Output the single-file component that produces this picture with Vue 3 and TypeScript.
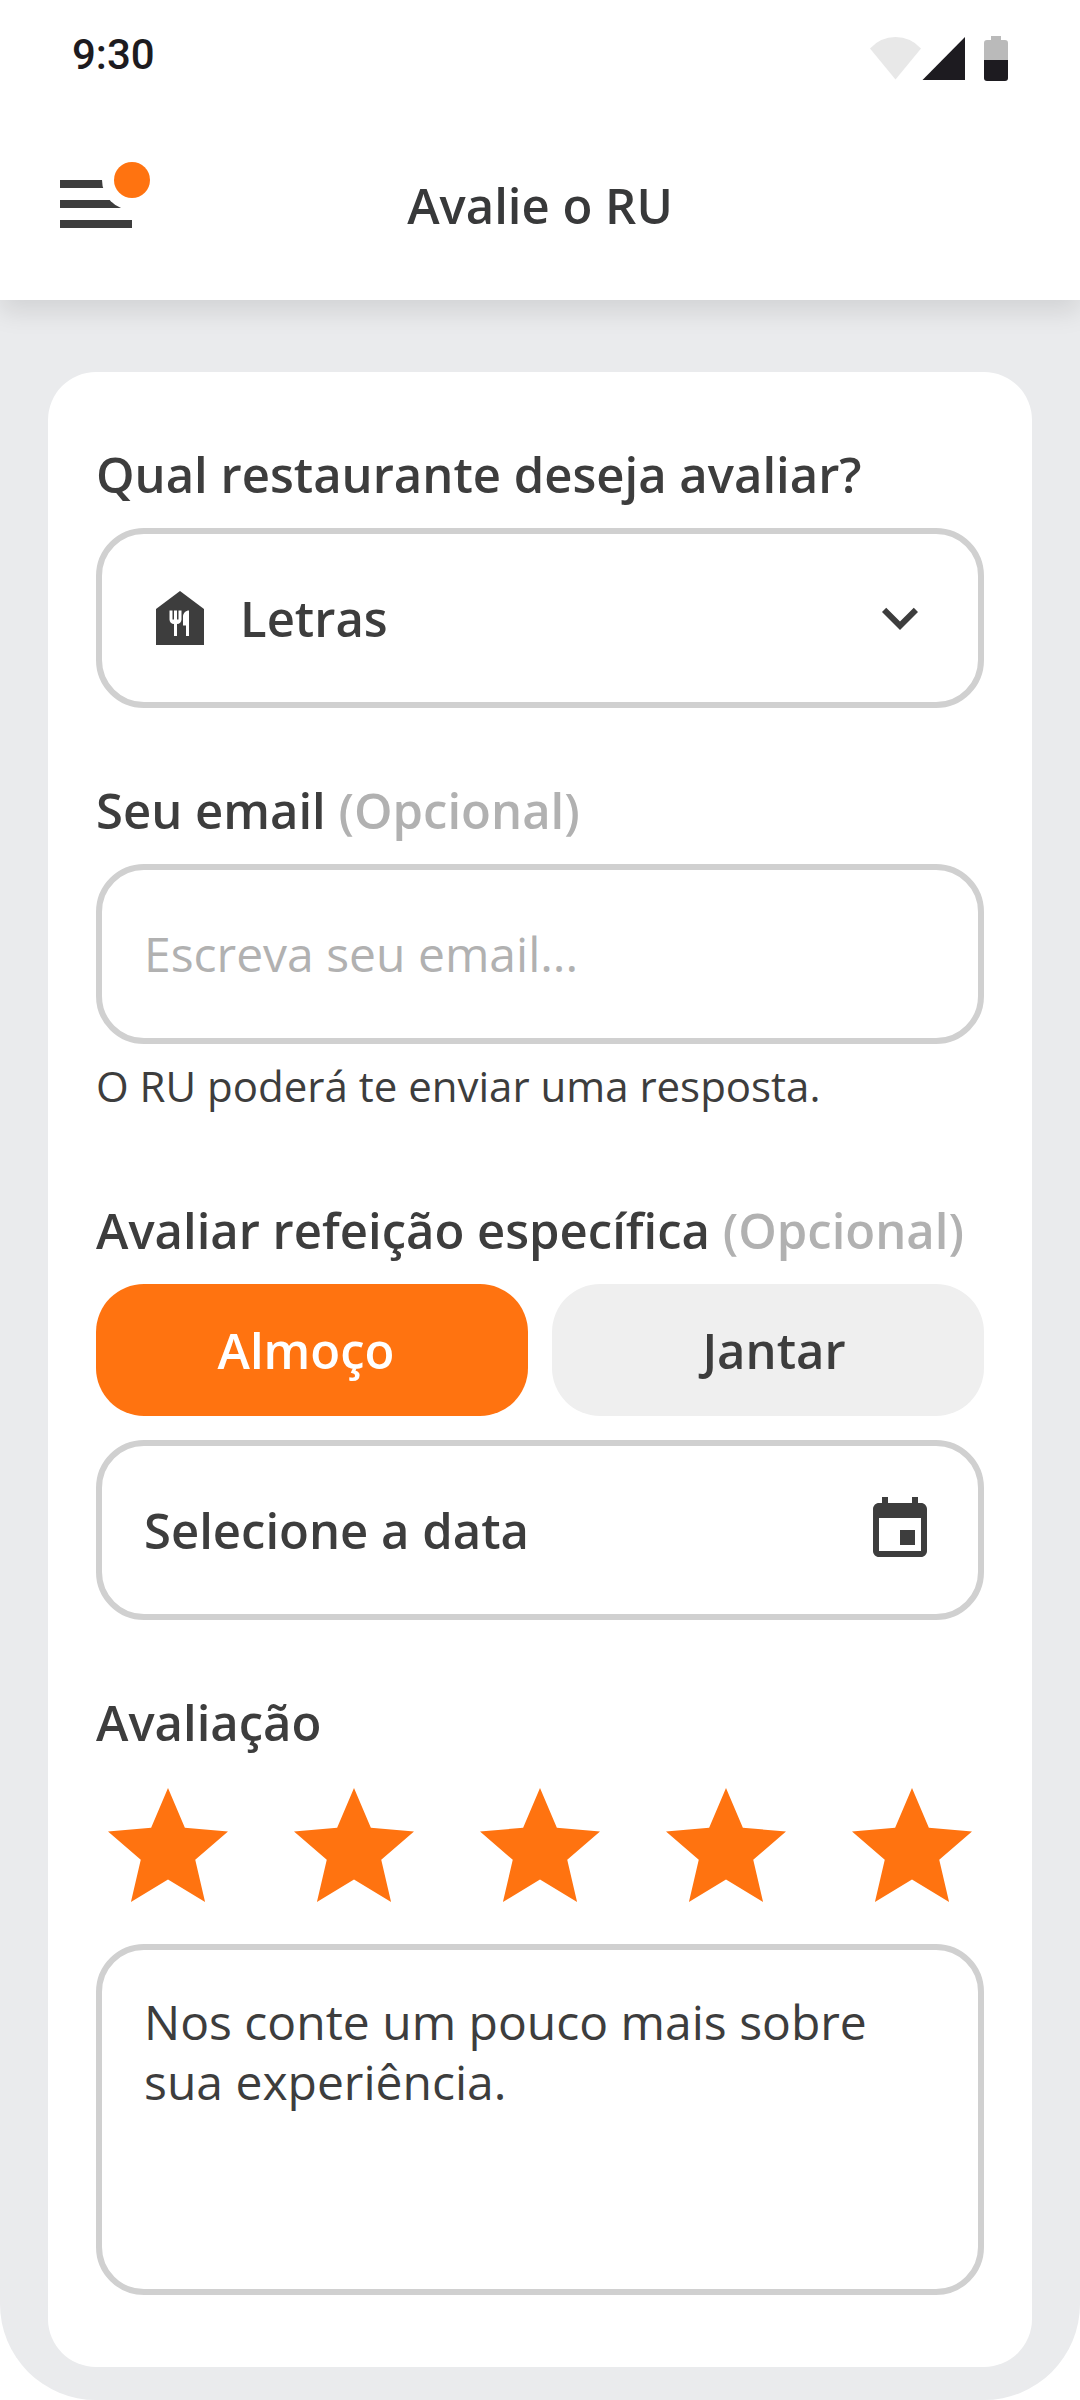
<script setup lang="ts">
import { ref } from 'vue'

type Meal = 'Almoço' | 'Jantar'

const restaurants: string[] = ['Letras']
const meals: Meal[] = ['Almoço', 'Jantar']

const restaurant = ref<string>('Letras')
const email = ref<string>('')
const meal = ref<Meal>('Almoço')
const rating = ref<number>(5)
const comment = ref<string>('')
</script>

<template>
  <div class="screen">
    <header class="top">
      <div class="status">
        <span class="clock">9:30</span>
        <svg class="status-icons" viewBox="0 -8 138 56" aria-hidden="true">
          <path d="M0 13.500Q10.500 2 25.500 2T51 13.500L25.500 44.500z" fill="#e8e8e8" />
          <path d="M95 2v43H52.500z" fill="#1d1b20" />
          <path d="M121 1h10v4h4a3 3 0 0 1 3 3v17h-24V8a3 3 0 0 1 3-3h4z" fill="#bababa" />
          <path d="M114 25h24v18a3 3 0 0 1-3 3h-18a3 3 0 0 1-3-3z" fill="#1d1b20" />
        </svg>
      </div>
      <div class="bar">
        <button class="menu" type="button" aria-label="Menu">
          <svg viewBox="0 0 90 86" aria-hidden="true">
            <path d="M0 18h72v8H0zM0 38h72v8H0zM0 58h72v8H0z" fill="#3d3d3d" />
            <circle cx="72" cy="18" r="30" fill="#fff" />
            <circle cx="72" cy="18" r="18" fill="#ff7310" />
          </svg>
        </button>
        <h1 class="title">Avalie o RU</h1>
      </div>
    </header>

    <main class="content">
      <form class="card" @submit.prevent>
        <section class="group">
          <label class="label" for="restaurant">Qual restaurante deseja avaliar?</label>
          <div class="field">
            <svg class="icon" viewBox="0 0 24 24" aria-hidden="true">
              <path
                d="M12 3 4 9v12h16V9l-8-6zm.5 9.500c0 .83-.67 1.500-1.500 1.500v4h-1v-4c-.83 0-1.500-.67-1.500-1.500v-3h1v3h.5v-3h1v3h.5v-3h1v3zM15 18h-1v-3.500h-1v-3c0-1.100.9-2 2-2V18z"
              />
            </svg>
            <select id="restaurant" v-model="restaurant" class="control strong">
              <option v-for="name in restaurants" :key="name" :value="name">{{ name }}</option>
            </select>
            <svg class="icon" viewBox="0 0 24 24" aria-hidden="true">
              <path d="M16.590 8.590 12 13.170 7.410 8.590 6 10l6 6 6-6z" />
            </svg>
          </div>
        </section>

        <section class="group">
          <label class="label" for="email">Seu email <span class="optional">(Opcional)</span></label>
          <div class="field">
            <input
              id="email"
              v-model="email"
              class="control"
              type="email"
              placeholder="Escreva seu email..."
            />
          </div>
          <p class="hint">O RU poderá te enviar uma resposta.</p>
        </section>

        <section class="group">
          <h2 class="label">Avaliar refeição específica <span class="optional">(Opcional)</span></h2>
          <div class="meals">
            <button
              v-for="name in meals"
              :key="name"
              type="button"
              class="meal"
              :class="{ active: meal === name }"
              :aria-pressed="meal === name"
              @click="meal = name"
            >
              {{ name }}
            </button>
          </div>
          <button type="button" class="field date">
            <span class="control strong">Selecione a data</span>
            <svg class="icon" viewBox="0 0 24 24" aria-hidden="true">
              <path
                d="M17 12h-5v5h5v-5zM16 1v2H8V1H6v2H5c-1.110 0-1.990.9-1.990 2L3 19c0 1.100.89 2 2 2h14c1.100 0 2-.9 2-2V5c0-1.100-.9-2-2-2h-1V1h-2zm3 18H5V8h14v11z"
              />
            </svg>
          </button>
        </section>

        <section class="group">
          <h2 class="label">Avaliação</h2>
          <div class="stars" role="radiogroup" aria-label="Avaliação">
            <label v-for="n in 5" :key="n" class="star" :class="{ lit: n <= rating }">
              <input v-model="rating" type="radio" name="rating" :value="n" :aria-label="`${n} de 5`" />
              <svg viewBox="0 0 24 24" aria-hidden="true">
                <path
                  d="M12 17.270 18.180 21l-1.640-7.030L22 9.240l-7.190-.61L12 2 9.190 8.630 2 9.240l5.460 4.730L5.820 21z"
                />
              </svg>
            </label>
          </div>
          <textarea
            v-model="comment"
            class="field comment"
            aria-label="Comentário"
            placeholder="Nos conte um pouco mais sobre sua experiência."
          ></textarea>
        </section>
      </form>
    </main>
  </div>
</template>

<style>
html,
body {
  background: #fff;
}
</style>

<style scoped>
.screen,
.screen * {
  box-sizing: border-box;
}

.screen {
  display: flex;
  flex-direction: column;
  min-height: 100vh;
  overflow: hidden;
  border-radius: 0 0 96px 96px;
  background: #eaebed;
  color: #3d3d3d;
  font-family: 'Open Sans', 'Noto Sans', sans-serif;
  font-size: 48px;
  line-height: 60px;
}

button,
input,
select,
textarea {
  margin: 0;
  color: inherit;
  font: inherit;
}

.top {
  display: flex;
  flex-direction: column;
  background: #fff;
  box-shadow: 0 12px 24px rgba(0, 0, 0, 0.1);
}

.status {
  display: flex;
  align-items: center;
  justify-content: space-between;
  height: 110px;
  padding: 0 72px;
}

.clock {
  color: #1d1b20;
  font-family: Roboto, sans-serif;
  font-size: 42px;
  font-weight: 500;
}

.status-icons {
  width: 138px;
  height: 56px;
}

.bar {
  display: grid;
  grid-template-columns: 1fr auto 1fr;
  align-items: center;
  height: 190px;
  padding: 0 60px;
}

.menu {
  justify-self: start;
  width: 90px;
  height: 86px;
  padding: 0;
  border: 0;
  background: none;
}

.menu svg,
.star svg {
  display: block;
  width: 100%;
  height: 100%;
}

.title,
.label,
.strong,
.meal {
  font-size: 49px;
  font-weight: 600;
}

.title,
.label {
  margin: 0;
}

.title {
  color: #38393a;
}

.content {
  padding: 72px 48px 33px;
}

.card {
  display: flex;
  flex-direction: column;
  gap: 72px;
  padding: 72px 48px;
  border-radius: 48px;
  background: #fff;
}

.group {
  display: flex;
  flex-direction: column;
  gap: 24px;
}

.optional {
  color: #b1b1b1;
}

.field {
  display: flex;
  align-items: center;
  gap: 24px;
  width: 100%;
  height: 180px;
  padding: 0 42px;
  border: 6px solid #d0d0d0;
  border-radius: 48px;
  background: #fff;
}

.control {
  flex: 1;
  min-width: 0;
  padding: 0;
  border: 0;
  outline: 0;
  appearance: none;
  background: none;
  text-align: left;
}

.control::placeholder {
  color: #b1b1b1;
  opacity: 1;
}

.icon {
  flex: none;
  width: 72px;
  height: 72px;
  fill: #3d3d3d;
}

.hint {
  margin: -12px 0 0;
  padding-bottom: 12px;
  font-size: 42px;
}

.meals {
  display: grid;
  grid-template-columns: 1fr 1fr;
  gap: 24px;
}

.meal {
  height: 132px;
  padding: 0;
  border: 0;
  border-radius: 48px;
  background: #efefef;
}

.meal:first-child {
  padding-right: 12px;
}

.meal:last-child {
  padding-left: 12px;
}

.meal.active {
  background: #ff7310;
  color: #fff;
}

.stars {
  display: flex;
  justify-content: space-between;
}

.star {
  position: relative;
  width: 144px;
  height: 144px;
  fill: #d0d0d0;
}

.star.lit {
  fill: #ff7310;
}

.star input {
  position: absolute;
  inset: 0;
  width: 100%;
  height: 100%;
  margin: 0;
  opacity: 0;
}

.comment {
  display: block;
  height: 351px;
  padding: 42px;
  outline: 0;
  resize: none;
}

.comment::placeholder {
  color: #3d3d3d;
  opacity: 1;
}
</style>
